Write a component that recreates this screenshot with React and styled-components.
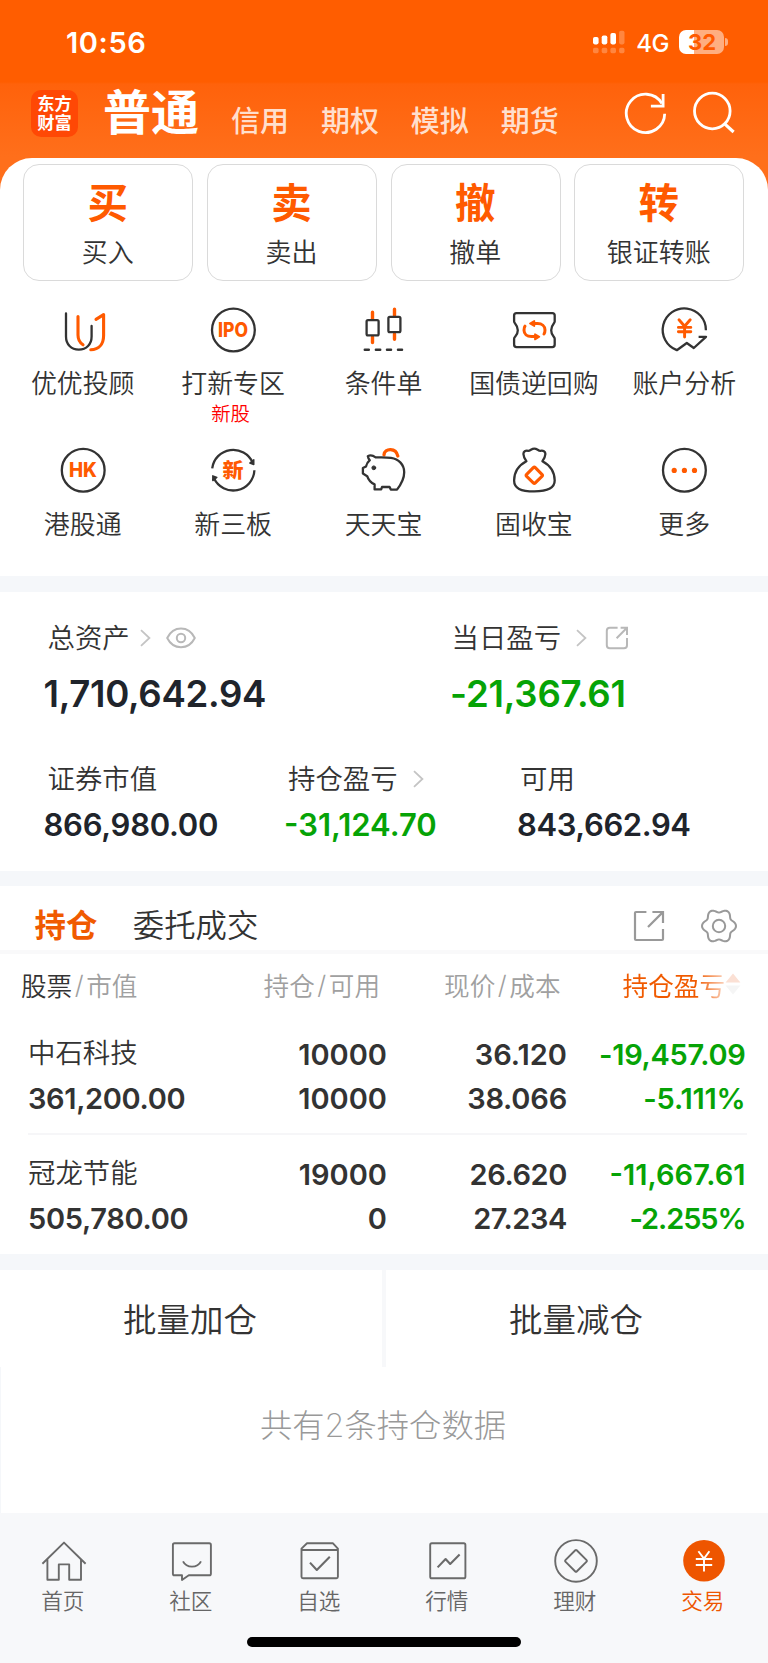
import React from "react";
import styled, { createGlobalStyle } from "styled-components";

const DARK = "#333333";
const ORANGE = "#ff5a00";
const GREEN = "#06a306";

const GlobalStyle = createGlobalStyle`
  * { box-sizing: border-box; }
  body {
    margin: 0;
    background: #fff;
    font-family: Inter, "Noto Sans CJK SC", sans-serif;
    font-weight: 350;
    color: ${DARK};
  }
  svg { display: block; flex: none; }
`;

const Page = styled.div`
  width: 768px;
  height: 1663px;
  overflow: hidden;
  background: linear-gradient(#ff5d00 0, #ff5d00 82px, #ff620b 84px, #ff6f1b 157px, #ff6f1b 190px, #fff 190px);
`;

/* ---------- header ---------- */
const StatusBar = styled.div`
  height: 83px;
  padding: 0 40px 0 66px;
  display: flex;
  align-items: center;
  color: #fff;
`;
const Clock = styled.div`
  font-size: 29px;
  font-weight: 600;
  letter-spacing: 0.6px;
  line-height: 40px;
  margin-right: auto;
  padding-top: 2px;
`;
const Network = styled.div`
  font-size: 24px;
  font-weight: 500;
  letter-spacing: -0.5px;
  line-height: 40px;
  margin: 4px 10px 0 11px;
`;
const Battery = styled.div`
  width: 45px;
  height: 24px;
  margin-top: 1px;
  border-radius: 7px;
  background: linear-gradient(90deg, #fff 0, #fff 15px, #ffae80 15px);
  color: ${ORANGE};
  font-size: 22px;
  font-weight: 700;
  line-height: 24px;
  text-align: center;
  padding-left: 1px;
`;
const BatteryCap = styled.div`
  width: 3px;
  height: 8px;
  margin: 1px 0 0 1px;
  border-radius: 0 4px 4px 0;
  background: #ffae80;
`;
const NavBar = styled.div`
  height: 74.5px;
  display: flex;
  padding: 0 31px 0 31px;
`;
const Logo = styled.div`
  width: 47px;
  height: 47px;
  margin: 6.5px 25px 0 0;
  padding-top: 4px;
  border-radius: 10px;
  background: #ff4805;
  color: #fff;
  font-size: 17.3px;
  font-weight: 700;
  line-height: 19.5px;
  text-align: center;
`;
const ActiveTab = styled.div`
  font-size: 48px;
  font-weight: 700;
  line-height: 60px;
  white-space: nowrap;
  width: 128px;
  color: #fff;
`;
const NavTab = styled.div`
  width: 89.9px;
  font-size: 29px;
  font-weight: 500;
  line-height: 40px;
  padding-top: 19px;
  color: #ffdfcd;
  white-space: nowrap;
`;
const NavIcons = styled.div`
  display: flex;
  gap: 22px;
  margin: 6px 0 0 auto;
`;

/* ---------- main panel ---------- */
const Panel = styled.div`
  height: 418.5px;
  padding-top: 6px;
  background: #fff;
  border-radius: 32px 32px 0 0;
`;
const CardRow = styled.div`
  display: grid;
  grid-template-columns: repeat(4, 170px);
  column-gap: 13.7px;
  padding-left: 23.3px;
`;
const Card = styled.div`
  height: 117.5px;
  border: 1.5px solid #dadada;
  border-radius: 16px;
  text-align: center;
`;
const CardGlyph = styled.div`
  margin-top: 14.5px;
  padding-right: 1px;
  font-size: 40.5px;
  font-weight: 700;
  line-height: 50px;
  color: ${ORANGE};
`;
const CardLabel = styled.div`
  margin-top: 8.5px;
  padding-right: 1px;
  font-size: 26px;
  line-height: 30px;
`;
const MenuGrid = styled.div`
  display: grid;
  grid-template-columns: repeat(5, 150.4px);
  grid-template-rows: 140.5px 110px;
  padding: 25.5px 0 0 7.5px;
  margin-top: -1px;
`;
const MenuItem = styled.div`
  display: flex;
  flex-direction: column;
  align-items: center;
`;
const MenuLabel = styled.div`
  margin-top: 14.5px;
  font-size: 25.9px;
  line-height: 32px;
  white-space: nowrap;
`;
const MenuNote = styled.div`
  margin-top: 4px;
  font-size: 19.4px;
  line-height: 20px;
  color: #f00;
  padding-right: 5px;
`;
const Gap = styled.div`
  height: ${(p) => p.$h}px;
  background: #f5f7fa;
`;

/* ---------- assets ---------- */
const Assets = styled.div`
  height: 279px;
  padding: 28px 0 0 43.5px;
  background: #fff;
`;
const AssetRow = styled.div`
  display: grid;
  grid-template-columns: ${(p) => p.$cols};
  height: ${(p) => p.$h}px;
`;
const AssetLabel = styled.div`
  display: flex;
  align-items: center;
  height: 36px;
  padding-left: ${(p) => p.$indent ?? 4}px;
  font-size: 27.4px;
  line-height: 36px;
  white-space: nowrap;
  svg { margin-left: ${(p) => p.$gap || 12}px; }
  svg + svg { margin-left: ${(p) => p.$gap2 || 15}px; }
`;
const AssetValue = styled.div`
  font-size: ${(p) => (p.$large ? 36.6 : 31)}px;
  font-weight: 600;
  line-height: 40px;
  margin-top: ${(p) => (p.$large ? 17.5 : 7.5)}px;
  letter-spacing: ${(p) => p.$ls || 0}px;
  color: ${(p) => (p.$down ? GREEN : "#20242b")};
  white-space: nowrap;
`;

/* ---------- holdings ---------- */
const TabRow = styled.div`
  height: 68px;
  padding: 0 31.5px 0 34.5px;
  display: flex;
  align-items: center;
  background: #fff;
  border-bottom: 4px solid #f9f9fa;
`;
const Tab = styled.div`
  font-size: 31.4px;
  font-weight: ${(p) => (p.$active ? 600 : 350)};
  color: ${(p) => (p.$active ? "#f05a00" : DARK)};
  line-height: 40px;
  margin: 15px 35.5px 0 0;
  white-space: nowrap;
`;
const TabIcons = styled.div`
  display: flex;
  align-items: center;
  gap: 36px;
  margin: 15px 0 0 auto;
`;
const TableHead = styled.div`
  height: 64px;
  padding-bottom: 4px;
  display: grid;
  grid-template-columns: 240px 119px 180.5px 180.5px;
  padding-left: 21px;
  background: #fff;
  color: #a0a0a0;
`;
const HeadCell = styled.div`
  display: flex;
  align-items: center;
  justify-content: ${(p) => (p.$right ? "flex-end" : "flex-start")};
  font-size: 25.6px;
  white-space: nowrap;
`;
const HeadMain = styled.span`
  color: ${DARK};
`;
const Slash = styled.span`
  width: 14px;
  text-align: center;
`;
const SortLabel = styled.span`
  font-weight: 400;
  background: linear-gradient(90deg, #f05a00 0 72%, #fbd3bd 100%);
  background-clip: text;
  -webkit-background-clip: text;
  color: transparent;
`;
const HoldingRow = styled.div`
  height: ${(p) => (p.$last ? 119 : 117)}px;
  margin: 0 21px 0 28px;
  padding-top: ${(p) => (p.$last ? 18.5 : 16)}px;
  display: grid;
  grid-template-columns: 200px 159px 180px 178.5px;
  border-bottom: 2px solid ${(p) => (p.$last ? "#fff" : "#f6f6f8")};
`;
const HoldingList = styled.div`
  background: #fff;
  height: 236px;
`;
const Cell = styled.div`
  text-align: ${(p) => (p.$left ? "left" : "right")};
  color: ${(p) => (p.$down ? GREEN : DARK)};
  white-space: nowrap;
`;
const StockName = styled.div`
  font-size: 27.4px;
  line-height: 38px;
  height: 44px;
`;
const Figure = styled.div`
  font-size: 29px;
  font-weight: 600;
  line-height: 40px;
  height: 44px;
  padding-top: 1px;
  letter-spacing: ${(p) => p.$ls || 0}px;
`;

/* ---------- batch and footer ---------- */
const BatchRow = styled.div`
  height: 97px;
  display: grid;
  grid-template-columns: 382px 382px;
  column-gap: 4px;
  background: linear-gradient(90deg, #fff 382px, #f7f8fa 382px, #f7f8fa 386px, #fff 386px);
`;
const BatchButton = styled.div`
  font-size: 33.5px;
  line-height: 101px;
  text-align: center;
  padding-right: 2px;
`;
const Summary = styled.div`
  height: 146px;
  border-left: 1px solid #f5f7fa;
  background: #fff;
  font-size: 32.3px;
  font-weight: 200;
  line-height: 117px;
  text-align: center;
  padding-right: 3px;
  color: #999;
`;
const BottomBar = styled.div`
  height: 150px;
  background: #f7f8fa;
`;
const BottomTabs = styled.div`
  display: grid;
  grid-template-columns: repeat(6, 128px);
  height: 124px;
  padding-top: 24px;
`;
const BottomTab = styled.div`
  display: flex;
  flex-direction: column;
  align-items: center;
  font-size: 21.6px;
  line-height: 30px;
  color: ${(p) => (p.$active ? "#ee5500" : "#666")};
  padding-right: 1px;
`;
const BottomLabel = styled.div`
  margin-top: 1px;
  padding-right: 1.5px;
`;
const HomeBar = styled.div`
  width: 274px;
  height: 10px;
  margin: 0 auto;
  border-radius: 5px;
  background: #000;
`;

/* ---------- icons ---------- */
const MenuSvg = ({ children }) => (
  <svg width="48" height="48" viewBox="0 0 48 48" fill="none" stroke={DARK} strokeWidth="2.3" strokeLinecap="round" strokeLinejoin="round">
    {children}
  </svg>
);
const TabSvg = ({ children }) => (
  <svg width="48" height="48" viewBox="0 0 48 48" fill="none" stroke="#6a6a6a" strokeWidth="1.9" strokeLinejoin="round">
    {children}
  </svg>
);
const BadgeText = ({ y, size, width, children }) => (
  <text x="24" y={y} textAnchor="middle" fontSize={size} fontWeight="800" fill={ORANGE} stroke="none"
    textLength={width} lengthAdjust="spacingAndGlyphs">{children}</text>
);

const Signal = () => (
  <svg width="32" height="24" viewBox="0 0 32 24" fill="#fff">
    <rect x="0" y="7" width="5.6" height="7.4" rx="1.8" />
    <rect x="8.7" y="5.4" width="5.6" height="9" rx="1.8" />
    <rect x="17.4" y="3" width="5.6" height="11.4" rx="1.8" />
    <g opacity="0.25">
      <rect x="26.1" y="0.8" width="5.4" height="13.6" rx="1.8" />
      <rect x="0" y="17.8" width="5.6" height="5.4" rx="1.6" />
      <rect x="8.7" y="17.8" width="5.6" height="5.4" rx="1.6" />
      <rect x="17.4" y="17.8" width="5.6" height="5.4" rx="1.6" />
      <rect x="26.1" y="17.8" width="5.4" height="5.4" rx="1.6" />
    </g>
  </svg>
);
const Refresh = () => (
  <svg width="46" height="48" viewBox="0 0 46 48" fill="none" stroke="#fff" strokeWidth="2.8">
    <path d="M41.7 24.8A19.2 19.2 0 1 1 38.9 14.4" />
    <path d="M40.1 5V17.2H27.9" />
  </svg>
);
const Search = () => (
  <svg width="46" height="48" viewBox="0 0 46 48" fill="none" stroke="#fff" strokeWidth="2.8">
    <circle cx="21.3" cy="22" r="17.8" />
    <path d="M33.4 34.6L42.6 43" strokeWidth="3.2" />
  </svg>
);

const YouIcon = () => (
  <MenuSvg>
    <path d="M7 7.5V30.5C7 38.5 12.2 43.6 19.8 43.6S32.6 38.5 32.6 30.5V20" />
    <g stroke={ORANGE} strokeWidth="3.1">
      <path d="M19 10.5V29C19 33.5 20.6 36.5 24 38.8" />
      <path d="M37 13.4L44.6 8.6V29.5C44.6 38.2 39.8 43.6 31.8 43.8" />
    </g>
  </MenuSvg>
);
const IpoIcon = () => (
  <MenuSvg>
    <circle cx="24.4" cy="24" r="21.4" />
    <BadgeText y="31" size="19.5" width="30">IPO</BadgeText>
  </MenuSvg>
);
const CandleIcon = () => (
  <MenuSvg>
    <path d="M13.5 6.3V13M13.5 31V36.5M35.5 3.3V9.5M35.5 28V33.2" stroke={ORANGE} strokeWidth="3.4" />
    <rect x="7.6" y="14.2" width="12" height="15.2" rx="1.4" />
    <rect x="29.4" y="10.8" width="12" height="15.4" rx="1.4" />
    <path d="M5.8 43.8H9.8M16.9 43.8H21.2M28 43.8H32M39 43.8H43" strokeWidth="2.5" />
  </MenuSvg>
);
const TicketIcon = () => (
  <MenuSvg>
    <path d="M6.5 7.2H42.3C43.8 7.2 44.7 8 44.7 9.6V15.6C44.7 17.6 41.2 18.4 41.2 24.2S44.7 30.6 44.7 32.8V38.6C44.7 40.4 43.8 41.2 42.3 41.2H6.5C5 41.2 4.1 40.4 4.1 38.6V32.8C4.1 30.6 7.8 30 7.8 24.2S4.1 17.6 4.1 15.6V9.6C4.1 8 5 7.2 6.5 7.2Z" />
    <g stroke={ORANGE} strokeWidth="3">
      <path d="M24 17.6H27.5C32 17.6 35 20 35 24Q35 26.5 34 28" />
      <path d="M25 30.6H21.5C17 30.6 14 28 14 24.2Q14 21.6 15 20.2" />
      <path d="M20 17.5L24.3 14.9V20.1ZM29.3 30.8L25 28.2V33.4Z" fill={ORANGE} strokeWidth="1.8" />
    </g>
  </MenuSvg>
);
const AnalysisIcon = () => (
  <MenuSvg>
    <path d="M45.9 24.2A21.6 21.6 0 1 0 16.8 44.2L26.8 37L33.8 42L46 30.8H38.6" strokeLinecap="butt" />
    <path d="M19 13.8L24.6 20.2L30.2 13.8M24.6 20.2V31M18.4 21.4H30.8M18.4 25.8H30.8" stroke={ORANGE} strokeWidth="2.9" />
  </MenuSvg>
);
const HkIcon = () => (
  <MenuSvg>
    <circle cx="24.2" cy="24.3" r="21.4" />
    <BadgeText y="31.4" size="19.5" width="28">HK</BadgeText>
  </MenuSvg>
);
const NewBoardIcon = () => (
  <MenuSvg>
    <path d="M3.2 22.3A21.2 21.2 0 0 1 43.6 16.4M45.4 24.3A21.2 21.2 0 0 1 5 32.2" strokeLinecap="butt" />
    <path d="M40.8 17L44.8 13.8V18.6ZM7.8 31.4L3.8 34.6V29.8Z" fill={DARK} strokeWidth="1.4" />
    <BadgeText y="31.8" size="20.5" width="21">新</BadgeText>
  </MenuSvg>
);
const PiggyIcon = () => (
  <MenuSvg>
    <path d="M25 8.8C25.6 1.8 37 1.4 38.8 10" stroke={ORANGE} strokeWidth="3.3" />
    <path d="M8.8 10.2C11 9 14.2 9.6 16.6 11.4C22 11.2 27.5 11.2 32 11.8C39.8 13 45.2 18.6 45.2 26.2C45.2 33 42 38.4 38 43.6H31.8L30.6 41H23L22.2 43.4H15.6V38.4C12.2 37 9.6 34.6 8.2 30.2L3.9 27.6V22L7 20.4C7.6 17.8 9 15.8 10.8 14.2C9.6 13 9 11.8 8.8 10.2Z" />
    <circle cx="14.8" cy="21.8" r="1.9" fill={DARK} strokeWidth="1" />
  </MenuSvg>
);
const BagIcon = () => (
  <MenuSvg>
    <path d="M16.4 15.2C14.6 13 13.6 10.6 13.4 8C13.4 5.4 15.4 4.2 18.2 4.8C20.6 4.8 21.4 2.6 24.3 2.6S28 4.8 30.4 4.8C33.2 4.2 35.4 5.4 35.4 8C35.2 10.6 34.2 13 32.4 15.2C40 19.2 44.7 25.6 44.7 34.6C44.7 42.4 38 45.4 24.3 45.4S4.1 42.4 4.1 34.6C4.1 25.6 8.8 19.2 16.4 15.2Z" />
    <rect x="18.2" y="23.2" width="12.2" height="12.2" rx="1.4" transform="rotate(45 24.3 29.3)" stroke={ORANGE} strokeWidth="3.1" />
  </MenuSvg>
);
const MoreIcon = () => (
  <MenuSvg>
    <circle cx="24.4" cy="24.3" r="21.4" />
    <g fill={ORANGE} stroke="none">
      <circle cx="14.2" cy="24.4" r="2.6" />
      <circle cx="24.4" cy="24.4" r="2.6" />
      <circle cx="34.5" cy="24.4" r="2.6" />
    </g>
  </MenuSvg>
);

const Chevron = () => (
  <svg width="11" height="18" viewBox="0 0 11 18" fill="none" stroke="#c4c4c4" strokeWidth="1.8">
    <path d="M1 1.2L9.4 9L1 16.8" />
  </svg>
);
const Eye = () => (
  <svg width="30" height="22" viewBox="0 0 30 22" fill="none" stroke="#b8b8b8" strokeWidth="2">
    <path d="M1.2 11C4.4 4.6 9.2 1.6 15 1.6S25.6 4.6 28.8 11C25.6 17.4 20.8 20.2 15 20.2S4.4 17.4 1.2 11Z" strokeLinejoin="round" />
    <circle cx="15" cy="11" r="4.2" />
  </svg>
);
const ShareSmall = () => (
  <svg width="24" height="24" viewBox="0 0 24 24" fill="none" stroke="#b8b8b8" strokeWidth="2">
    <path d="M12.6 1.8H4.8Q1.8 1.8 1.8 4.8V19.2Q1.8 22.2 4.8 22.2H19Q22 22.2 22 19.2V12" />
    <path d="M15.6 1.8H22V9M22 1.8L11.6 12.2" />
  </svg>
);
const ShareLarge = () => (
  <svg width="32" height="32" viewBox="0 0 32 32" fill="none" stroke="#999" strokeWidth="2.2">
    <path d="M13.4 2H3Q2 2 2 3V29Q2 30 3 30H29Q30 30 30 29V19" />
    <path d="M19.4 2H30V13M29.6 2.4L15 17" />
  </svg>
);
const gearPath = Array.from({ length: 73 }, (_, i) => {
  const a = (i * Math.PI) / 36;
  const r = 15.3 + 1.8 * Math.cos(6 * a) - 0.1 * Math.cos(12 * a);
  return `${i ? "L" : "M"}${(20 + r * Math.cos(a)).toFixed(2)} ${(20 + r * Math.sin(a)).toFixed(2)}`;
}).join("");
const Gear = () => (
  <svg width="36" height="36" viewBox="2 2 36 36" fill="none" stroke="#999" strokeWidth="2" strokeLinejoin="round">
    <path d={gearPath + "Z"} />
    <circle cx="20" cy="20" r="6.2" />
  </svg>
);
const SortArrows = () => (
  <svg width="16" height="22" viewBox="0 0 16 22">
    <path d="M8 0.5L15.4 9.5H0.6Z" fill="#fbe0d4" />
    <path d="M8 21.5L15.4 12.5H0.6Z" fill="#f5f5f5" />
  </svg>
);

const HomeIcon = () => (
  <TabSvg>
    <path d="M2.4 26.8L24 5.6L45.6 26.8M7.4 22.4V42.8H18.8V27.4H29.2V42.8H41V22.4" />
  </TabSvg>
);
const CommunityIcon = () => (
  <TabSvg>
    <path d="M6.5 6.3H41.3Q42.9 6.3 42.9 7.9V36.7Q42.9 38.3 41.3 38.3H20.8L14 43V38.3H6.5Q4.9 38.3 4.9 36.7V7.9Q4.9 6.3 6.5 6.3Z" />
    <path d="M15 24.4C18.6 31.4 29.4 31.4 33 24.4" />
  </TabSvg>
);
const WatchIcon = () => (
  <TabSvg>
    <path d="M11 6.3H37L41.9 11.6V39.8Q41.9 41.3 40.4 41.3H7Q5.5 41.3 5.5 39.8V11.6ZM5.5 13H41.9" />
    <path d="M14 25.6L20.8 33L33.8 19.8" strokeWidth="2.1" />
  </TabSvg>
);
const MarketIcon = () => (
  <TabSvg>
    <rect x="6.2" y="6.3" width="35.2" height="35" rx="1.6" />
    <path d="M13.6 30.4L21.6 22L26.2 27L35.6 17.6" strokeWidth="2.1" />
  </TabSvg>
);
const WealthIcon = () => (
  <TabSvg>
    <circle cx="24" cy="23.9" r="20.8" />
    <rect x="16" y="15.9" width="16" height="16" rx="1" transform="rotate(45 24 23.9)" />
  </TabSvg>
);
const TradeIcon = () => (
  <TabSvg>
    <circle cx="24" cy="23.7" r="20.8" fill="#ee5500" stroke="none" />
    <path d="M18.4 14.2L24 21.6L29.4 14.2M24 21.6V34.6M15.8 22H32.2M15.8 28H32.2" stroke="#fff" />
  </TabSvg>
);

/* ---------- data ---------- */
const cards = [["买", "买入"], ["卖", "卖出"], ["撤", "撤单"], ["转", "银证转账"]];
const menu = [
  [YouIcon, "优优投顾"], [IpoIcon, "打新专区", "新股"], [CandleIcon, "条件单"], [TicketIcon, "国债逆回购"], [AnalysisIcon, "账户分析"],
  [HkIcon, "港股通"], [NewBoardIcon, "新三板"], [PiggyIcon, "天天宝"], [BagIcon, "固收宝"], [MoreIcon, "更多"],
];
/* each figure is [text, letter spacing] */
const holdings = [
  {
    name: "中石科技",
    value: ["361,200.00", -0.35],
    qty: [["10000", 0], ["10000", 0]],
    price: [["36.120", 0], ["38.066", -0.2]],
    pnl: [["-19,457.09", -0.3], ["-5.111%", -0.2]],
  },
  {
    name: "冠龙节能",
    value: ["505,780.00", -0.3],
    qty: [["19000", 0], ["0", 0]],
    price: [["26.620", -0.4], ["27.234", -0.4]],
    pnl: [["-11,667.61", 0], ["-2.255%", -1.1]],
  },
];
const tabs = [[HomeIcon, "首页"], [CommunityIcon, "社区"], [WatchIcon, "自选"], [MarketIcon, "行情"], [WealthIcon, "理财"], [TradeIcon, "交易"]];

const Figures = ({ items }) => items.map(([text, ls], k) => <Figure key={k} $ls={ls}>{text}</Figure>);

export default function App() {
  return (
    <Page>
      <GlobalStyle />
      <StatusBar>
        <Clock>10:56</Clock>
        <Signal />
        <Network>4G</Network>
        <Battery>32</Battery>
        <BatteryCap />
      </StatusBar>
      <NavBar>
        <Logo>东方<br />财富</Logo>
        <ActiveTab>普通</ActiveTab>
        {["信用", "期权", "模拟", "期货"].map((t) => <NavTab key={t}>{t}</NavTab>)}
        <NavIcons><Refresh /><Search /></NavIcons>
      </NavBar>
      <Panel>
        <CardRow>
          {cards.map(([g, l]) => (
            <Card key={g}>
              <CardGlyph>{g}</CardGlyph>
              <CardLabel>{l}</CardLabel>
            </Card>
          ))}
        </CardRow>
        <MenuGrid>
          {menu.map(([Icon, label, note]) => (
            <MenuItem key={label}>
              <Icon />
              <MenuLabel>{label}</MenuLabel>
              {note && <MenuNote>{note}</MenuNote>}
            </MenuItem>
          ))}
        </MenuGrid>
      </Panel>
      <Gap $h={16} />
      <Assets>
        <AssetRow $cols="406.5px 1fr" $h={141}>
          <div>
            <AssetLabel $gap={10}>总资产<Chevron /><Eye /></AssetLabel>
            <AssetValue $large $ls={-0.3}>1,710,642.94</AssetValue>
          </div>
          <div>
            <AssetLabel $indent={1.5} $gap={15} $gap2={18}>当日盈亏<Chevron /><ShareSmall /></AssetLabel>
            <AssetValue $large $down $ls={-0.2}>-21,367.61</AssetValue>
          </div>
        </AssetRow>
        <AssetRow $cols="240.5px 233px 1fr" $h={100}>
          <div>
            <AssetLabel>证券市值</AssetLabel>
            <AssetValue $ls={-0.25}>866,980.00</AssetValue>
          </div>
          <div>
            <AssetLabel $gap={15}>持仓盈亏<Chevron /></AssetLabel>
            <AssetValue $down>-31,124.70</AssetValue>
          </div>
          <div>
            <AssetLabel $indent={3}>可用</AssetLabel>
            <AssetValue $ls={-0.4}>843,662.94</AssetValue>
          </div>
        </AssetRow>
      </Assets>
      <Gap $h={15} />
      <TabRow>
        <Tab $active>持仓</Tab>
        <Tab>委托成交</Tab>
        <TabIcons><ShareLarge /><Gear /></TabIcons>
      </TabRow>
      <TableHead>
        <HeadCell><HeadMain>股票</HeadMain><Slash>/</Slash>市值</HeadCell>
        <HeadCell $right>持仓<Slash>/</Slash>可用</HeadCell>
        <HeadCell $right>现价<Slash>/</Slash>成本</HeadCell>
        <HeadCell $right><SortLabel>持仓盈亏</SortLabel><SortArrows /></HeadCell>
      </TableHead>
      <HoldingList>
        {holdings.map((h, i) => (
          <HoldingRow key={h.name} $last={i === 1}>
            <Cell $left><StockName>{h.name}</StockName><Figures items={[h.value]} /></Cell>
            <Cell><Figures items={h.qty} /></Cell>
            <Cell><Figures items={h.price} /></Cell>
            <Cell $down><Figures items={h.pnl} /></Cell>
          </HoldingRow>
        ))}
      </HoldingList>
      <Gap $h={16} />
      <BatchRow>
        <BatchButton>批量加仓</BatchButton>
        <BatchButton>批量减仓</BatchButton>
      </BatchRow>
      <Summary>共有2条持仓数据</Summary>
      <BottomBar>
        <BottomTabs>
          {tabs.map(([Icon, label], i) => (
            <BottomTab key={label} $active={i === 5}>
              <Icon />
              <BottomLabel>{label}</BottomLabel>
            </BottomTab>
          ))}
        </BottomTabs>
        <HomeBar />
      </BottomBar>
    </Page>
  );
}
